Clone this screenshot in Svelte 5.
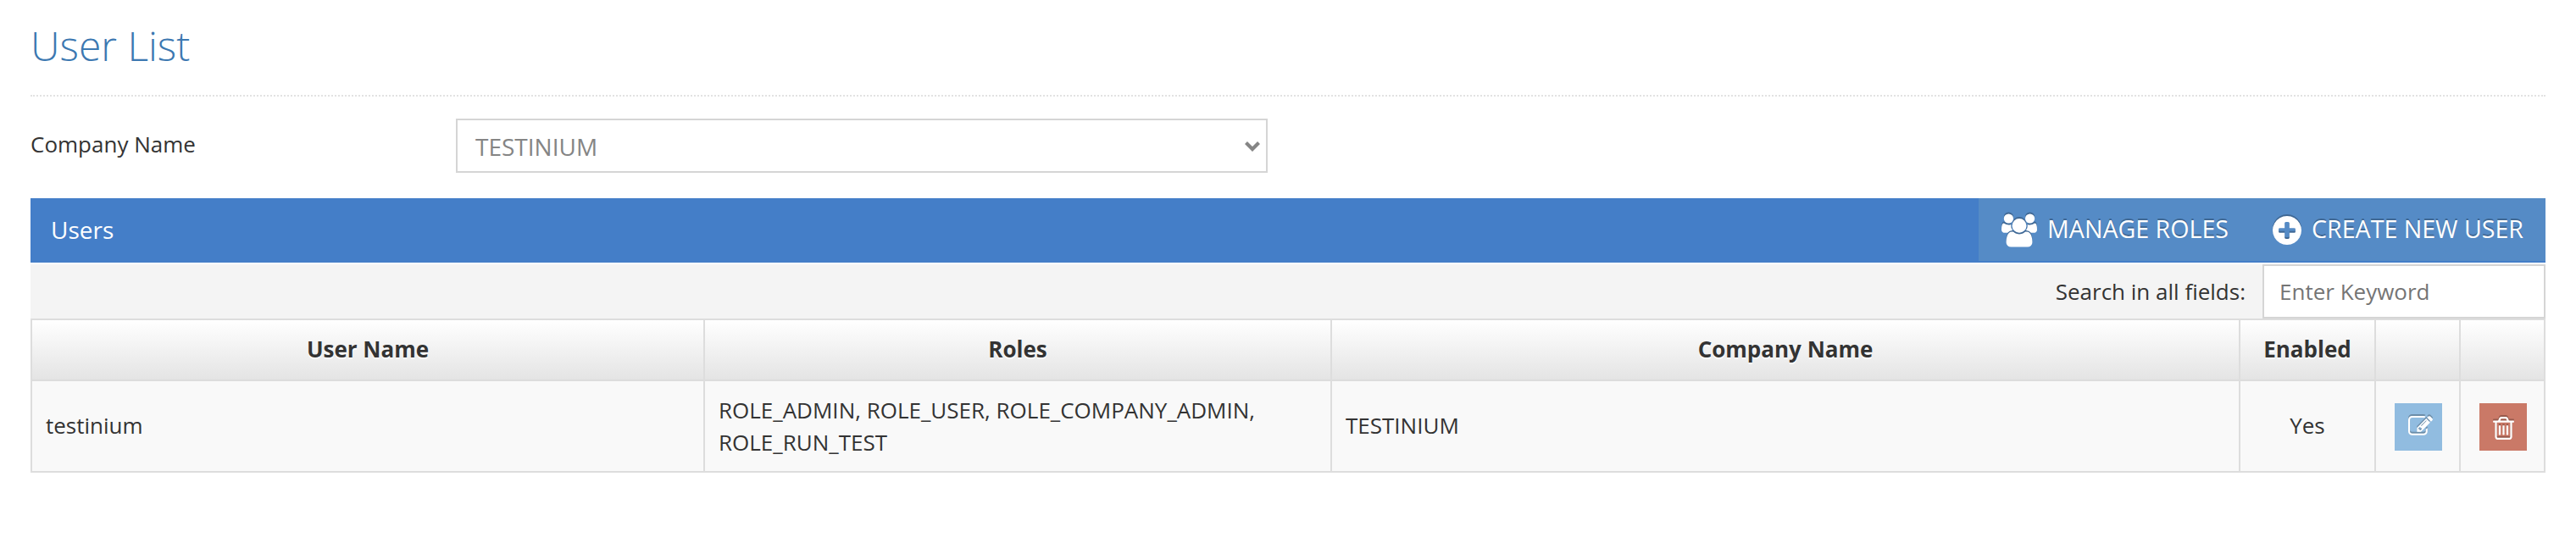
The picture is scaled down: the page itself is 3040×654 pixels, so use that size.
<script>
  const users = [
    {
      name: 'testinium',
      roles: 'ROLE_ADMIN, ROLE_USER, ROLE_COMPANY_ADMIN, ROLE_RUN_TEST',
      company: 'TESTINIUM',
      enabled: 'Yes'
    }
  ];
</script>

<main>
  <h1>User List</h1>

  <div class="filter">
    <label for="company">Company Name</label>
    <div class="select" id="company">
      <span>TESTINIUM</span>
      <svg width="20" height="14" viewBox="0 0 20 14"><path d="M2.500 2.500l7.500 7.500 7.500-7.500" fill="none" stroke="#858585" stroke-width="4.200" /></svg>
    </div>
  </div>

  <div class="bar">
    <span class="bar-title">Users</span>
    <div class="actions">
      <button class="manage">
        <svg class="ic" width="42" height="40" viewBox="0 0 1920 1792">
          <path d="M593 896q-162 5-265 128H194q-82 0-138-40.500T0 865q0-353 124-353 6 0 43.500 21t97.500 42.500T384 597q67 0 133-23-5 37-5 66 0 139 81 256zm1071 637q0 120-73 189.500t-194 69.500H523q-121 0-194-69.500T256 1533q0-53 3.500-103.500t14-109T300 1212t43-97.500 62-81 85.500-53.500T602 960q10 0 43 21.500t73 48 107 48 135 21.500 135-21.500 107-48 73-48 43-21.500q61 0 111.500 20t85.500 53.500 62 81 43 97.500 26.500 108.500 14 109 3.500 103.500zM640 256q0 106-75 181t-181 75-181-75-75-181 75-181T384 0t181 75 75 181zm704 384q0 159-112.500 271.500T960 1024 688.500 911.500 576 640t112.500-271.500T960 256t271.500 112.500T1344 640zm576 225q0 78-56 118.500t-138 40.500h-134q-103-123-265-128 81-117 81-256 0-29-5-66 66 23 133 23 59 0 119-21.500t97.500-42.500 43.500-21q124 0 124 353zm-128-609q0 106-75 181t-181 75-181-75-75-181 75-181 181-75 181 75 75 181z" />
        </svg>
        <span>MANAGE ROLES</span>
      </button>
      <button class="create">
        <svg class="ic" width="34" height="34" viewBox="128 128 1536 1536">
          <path d="M1344 960V832q0-26-19-45t-45-19h-256V512q0-26-19-45t-45-19H832q-26 0-45 19t-19 45v256H512q-26 0-45 19t-19 45v128q0 26 19 45t45 19h256v256q0 26 19 45t45 19h128q26 0 45-19t19-45v-256h256q26 0 45-19t19-45zm320-64q0 209-103 385.500T1281.500 1561 896 1664t-385.500-103T231 1281.500 128 896t103-385.500T510.500 231 896 128t385.500 103T1561 510.500 1664 896z" />
        </svg>
        <span>CREATE NEW USER</span>
      </button>
    </div>
  </div>

  <div class="search">
    <span>Search in all fields:</span>
    <input type="text" placeholder="Enter Keyword" />
  </div>

  <table>
    <colgroup>
      <col class="c1" /><col class="c2" /><col class="c3" /><col class="c4" /><col class="c5" /><col class="c5" />
    </colgroup>
    <thead>
      <tr><th>User Name</th><th>Roles</th><th>Company Name</th><th>Enabled</th><th></th><th></th></tr>
    </thead>
    <tbody>
      {#each users as u}
        <tr>
          <td class="line">{u.name}</td>
          <td>{u.roles}</td>
          <td class="line">{u.company}</td>
          <td class="line mid">{u.enabled}</td>
          <td class="act">
            <button class="sq edit" aria-label="Edit">
              <svg class="ic2" width="29" height="23" viewBox="0 128 1792 1421">
                <path d="M888 1184l116-116-152-152-116 116v56h96v96h56zm440-720q-16-16-33 1l-350 350q-17 17-1 33t33-1l350-350q17-17 1-33zm80 594v190q0 119-84.500 203.500t-203.500 84.500h-832q-119 0-203.500-84.500t-84.500-203.500v-832q0-119 84.500-203.500t203.500-84.500h832q63 0 117 25 15 7 18 23 3 17-9 29l-49 49q-14 14-32 8-23-6-45-6h-832q-66 0-113 47t-47 113v832q0 66 47 113t113 47h832q66 0 113-47t47-113v-126q0-13 9-22l64-64q15-15 35-7t20 29zm-96-738l288 288-672 672h-288v-288zm444 132l-92 92-288-288 92-92q28-28 68-28t68 28l152 152q28 28 28 68t-28 68z" />
              </svg>
            </button>
          </td>
          <td class="act">
            <button class="sq del" aria-label="Delete">
              <svg class="ic2" width="25" height="27" viewBox="192 128 1408 1536">
                <path d="M704 736v576q0 14-9 23t-23 9h-64q-14 0-23-9t-9-23V736q0-14 9-23t23-9h64q14 0 23 9t9 23zm256 0v576q0 14-9 23t-23 9h-64q-14 0-23-9t-9-23V736q0-14 9-23t23-9h64q14 0 23 9t9 23zm256 0v576q0 14-9 23t-23 9h-64q-14 0-23-9t-9-23V736q0-14 9-23t23-9h64q14 0 23 9t9 23zm128 724V512H448v948q0 22 7 40.500t14.500 27 10.500 8.500h832q3 0 10.500-8.500t14.500-27 7-40.500zM672 384h448l-48-117q-7-9-17-11H738q-10 2-17 11zm928 32v64q0 14-9 23t-23 9h-96v948q0 83-47 143.500t-113 60.500H480q-66 0-113-58.500T320 1464V512h-96q-14 0-23-9t-9-23v-64q0-14 9-23t23-9h309l70-167q15-37 54-63t79-26h320q40 0 79 26t54 63l70 167h309q14 0 23 9t9 23z" />
              </svg>
            </button>
          </td>
        </tr>
      {/each}
    </tbody>
  </table>
</main>

<style>
  :global(body) {
    margin: 0;
    background: #fff;
  }
  main {
    box-sizing: border-box;
    padding: 0 36px;
    font-family: 'Open Sans', sans-serif;
    font-size: 26px;
    color: #333;
  }
  h1 {
    margin: 0;
    box-sizing: border-box;
    height: 114px;
    padding-top: 20px;
    border-bottom: 2px dotted #e2e2e2;
    font-size: 48px;
    line-height: 68px;
    font-weight: 300;
    color: #3c78b1;
  }
  .filter {
    display: flex;
    height: 120px;
    padding-top: 26px;
    box-sizing: border-box;
  }
  .filter label {
    width: 502px;
    line-height: 60px;
  }
  .select {
    box-sizing: border-box;
    width: 958px;
    height: 64px;
    border: 2px solid #d5d5d5;
    padding: 2px 6px 0 21px;
    display: flex;
    align-items: center;
    justify-content: space-between;
    color: #858585;
    font-size: 28px;
  }
  .bar {
    display: flex;
    justify-content: space-between;
    height: 76px;
    background: #447ec8;
    color: #fff;
    margin-bottom: 2px;
  }
  .bar-title {
    padding-left: 24px;
    font-size: 28px;
    line-height: 74px;
  }
  .actions {
    display: flex;
    height: 74px;
  }
  button {
    border: 0;
    margin: 0;
    padding: 0;
    color: #fff;
    font-family: inherit;
  }
  .actions button {
    display: flex;
    align-items: center;
    background: #558bc6;
    font-size: 28.6px;
    line-height: 72px;
    padding: 0 26px;
    text-shadow: 0 -2px 0 rgba(0, 0, 0, 0.25);
  }
  .actions .manage {
    padding-left: 27px;
  }
  .actions span {
    margin-left: 12px;
    padding-bottom: 2px;
  }
  .ic {
    fill: #fff;
    margin-top: 2px;
    overflow: visible;
    filter: drop-shadow(0 -2px 0 rgba(0, 0, 0, 0.25));
  }
  .ic2 {
    display: block;
    fill: #fff;
    overflow: visible;
    filter: drop-shadow(0 -2px 0 rgba(0, 0, 0, 0.25));
  }
  .search {
    display: flex;
    justify-content: flex-end;
    align-items: center;
    height: 64px;
    background: #f4f4f4;
  }
  .search input {
    box-sizing: border-box;
    width: 334px;
    height: 64px;
    margin: 0 0 0 20px;
    border: 2px solid #d5d5d5;
    border-radius: 0;
    padding: 0 18px;
    background: #fff;
    font: 26px 'Open Sans', sans-serif;
  }
  .search input::placeholder {
    color: #757575;
  }
  table {
    width: 2968px;
    table-layout: fixed;
    border-collapse: separate;
    border-spacing: 0;
    border: solid #ddd;
    border-width: 2px 0 0 2px;
  }
  .c1 { width: 794px; }
  .c2 { width: 740px; }
  .c3 { width: 1072px; }
  .c4 { width: 160px; }
  .c5 { width: 100px; }
  th,
  td {
    box-sizing: border-box;
    border: solid #ddd;
    border-width: 0 2px 2px 0;
    padding: 0 16px;
    text-align: left;
    vertical-align: middle;
    line-height: 38px;
  }
  th {
    height: 72px;
    padding-bottom: 2px;
    text-align: center;
    font-weight: 700;
    text-shadow: 0 2px 0 #fff;
    background: linear-gradient(#fff, #e4e4e4);
    background-clip: padding-box;
  }
  td {
    height: 108px;
    background: #f9f9f9;
  }
  td.line {
    padding-bottom: 2px;
  }
  td.mid {
    text-align: center;
  }
  td.act {
    padding: 2px 20px 0 22px;
  }
  .sq {
    box-sizing: border-box;
    display: flex;
    align-items: center;
    justify-content: center;
    width: 56px;
    height: 56px;
  }
  .edit {
    padding: 0 0 3px 5px;
    background: #91bce0;
  }
  .del {
    padding: 2px 0 0 1px;
    background: #ca7967;
  }
</style>
